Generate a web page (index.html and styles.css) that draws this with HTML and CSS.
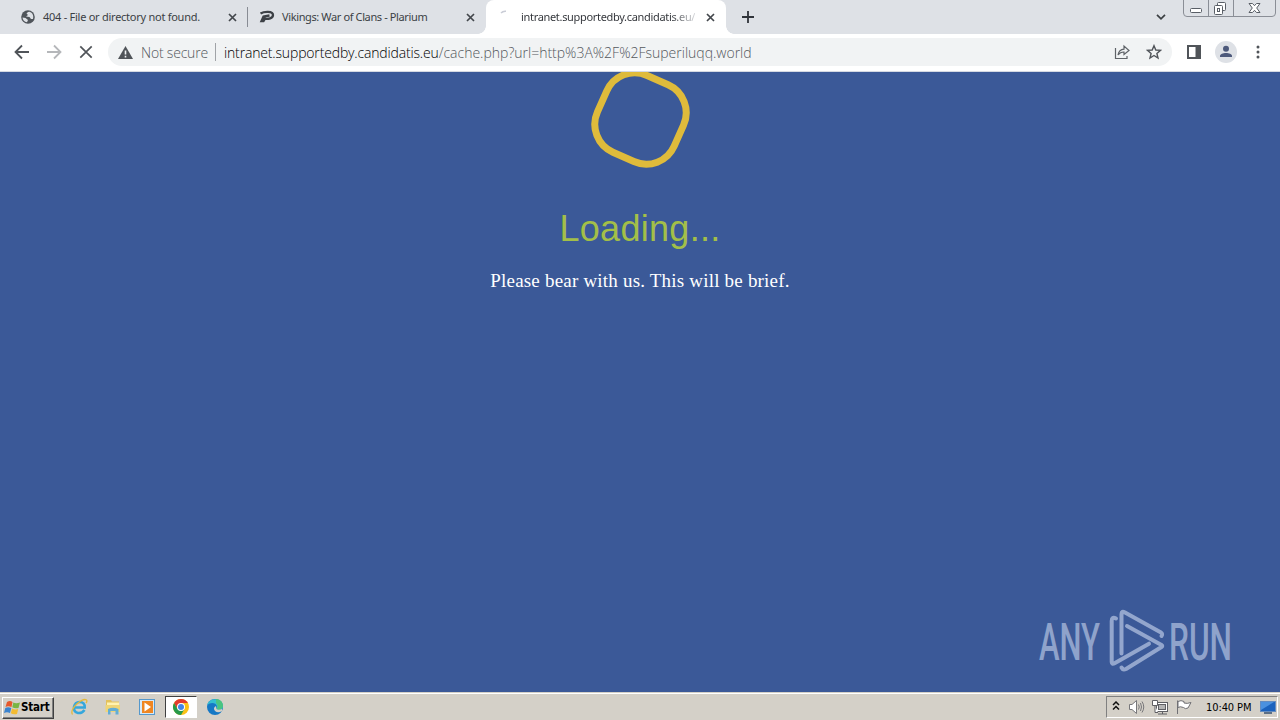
FILE: index.html
```
<!DOCTYPE html>
<html lang="en">
  <head>
    <meta charset="UTF-8" />
    <meta name="viewport" content="width=device-width, initial-scale=1.0" />
    <title>Loading</title>
    <link rel="stylesheet" href="styles.css">
  </head>
  <body>
    <div class="tab-strip">
      <div class="tab tab-first">
        <svg class="tab-icon" width="14" height="14" viewBox="0 0 14 14">
          <circle cx="7" cy="7" r="6.8" fill="#50555b"/>
          <path d="M1.5 7.5 L4.5 8 L7 10 L6 12.3 C3.5 12 1.7 10 1.5 7.5Z M7 2 L5.5 3.5 L7 5 L5 6.5 L8.5 7 L10 9 L12 9 C13 6 11.500 2.500 8.500 1.800Z" fill="#dee1e6"/>
        </svg>
        <span class="tab-title title-one">404 - File or directory not found.</span>
        <svg class="close" width="9" height="9" viewBox="0 0 9 9"><path d="M1 1 L8 8 M8 1 L1 8"/></svg>
      </div>
      <div class="tab tab-second">
        <svg class="tab-icon" width="16" height="14" viewBox="0 0 16 14">
          <path d="M1.500 3.500 C5 1.500 14 .8 14 5 C14 8.500 9 9.300 6 8.700 L4.500 11 L2.500 11 L4.500 6.500 L10.500 5.500" fill="none" stroke="#3c4046" stroke-width="2.300"/>
        </svg>
        <span class="tab-title title-two">Vikings: War of Clans - Plarium</span>
        <svg class="close" width="9" height="9" viewBox="0 0 9 9"><path d="M1 1 L8 8 M8 1 L1 8"/></svg>
      </div>
      <div class="tab tab-active">
        <svg class="tab-icon" width="14" height="14" viewBox="0 0 14 14"><path d="M4 3 Q6 .8 9 1.200" fill="none" stroke="#c9ccd6" stroke-width="1.500"/></svg>
        <span class="tab-title title-three">intranet.supportedby.candidatis.eu/</span>
        <svg class="close" width="9" height="9" viewBox="0 0 9 9"><path d="M1 1 L8 8 M8 1 L1 8"/></svg>
      </div>
      <svg class="new-tab" width="12" height="12" viewBox="0 0 12 12"><path d="M6 0 V12 M0 6 H12" stroke="#30343a" stroke-width="1.800"/></svg>
      <svg class="tab-search" width="10" height="6" viewBox="0 0 10 6"><path d="M1 .8 L5 4.800 L9 .8" fill="none" stroke="#3c4043" stroke-width="1.700"/></svg>
      <svg class="window-buttons" width="94" height="17" viewBox="0 0 94 17">
        <path d="M.5 0 V13 Q.5 16.500 4 16.500 H89 Q92.500 16.500 92.500 13 V0 M25.500 0 V16 M50.500 0 V16" fill="none" stroke="#8a8e96"/>
        <rect x="7.500" y="8.500" width="11" height="4" rx="1" fill="#fff" stroke="#595e66"/>
        <g fill="#fff" stroke="#595e66">
          <rect x="34.500" y="2.500" width="8" height="8" rx="1"/>
          <rect x="31.500" y="5.500" width="8" height="9" rx="1"/>
          <rect x="34.500" y="8.500" width="2" height="3"/>
          <path d="M66 3.500 H69.500 L71.500 5.700 L73.500 3.500 H77 L73.700 8 L77 12.500 H73.500 L71.500 10.300 L69.500 12.500 H66 L69.300 8Z"/>
        </g>
      </svg>
    </div>

    <div class="toolbar">
      <div class="nav-buttons">
        <svg width="16" height="16" viewBox="0 0 16 16"><path d="M15 8 H2 M8 1.500 L1.500 8 L8 14.500" fill="none" stroke="#505459" stroke-width="1.800"/></svg>
        <svg width="16" height="16" viewBox="0 0 16 16"><path d="M1 8 H14 M8 1.500 L14.500 8 L8 14.500" fill="none" stroke="#b5b7ba" stroke-width="1.800"/></svg>
        <svg width="16" height="16" viewBox="0 0 16 16"><path d="M2.300 2.300 L13.700 13.700 M13.700 2.300 L2.300 13.700" fill="none" stroke="#505459" stroke-width="1.700"/></svg>
      </div>
      <div class="address-bar">
        <svg width="15" height="13" viewBox="0 0 15 13"><path d="M7.500 0 L15 13 H0Z" fill="#505459"/><path d="M7.500 4.500 V8.500 M7.500 9.800 V11.500" stroke="#f1f3f4" stroke-width="1.600"/></svg>
        <span class="not-secure">Not secure</span>
        <span class="url"><span class="url-host">intranet.supportedby.candidatis.eu</span><span class="url-path">/cache.php?url=http%3A%2F%2Fsuperiluqq.world</span></span>
        <svg class="share" width="16" height="16" viewBox="0 0 16 16"><path d="M1.500 4 V14.500 H13 V12 M4 11 Q5 5.500 10 5.200 V2 L15 6.500 L10 10.500 V8 Q6.500 7.800 4 11Z" fill="none" stroke="#5f6368" stroke-width="1.200"/></svg>
        <svg class="star" width="16" height="16" viewBox="0 0 16 16"><path d="M8 1.700 L9.800 6 L14.500 6.400 L10.900 9.400 L12 14 L8 11.500 L4 14 L5.100 9.400 L1.500 6.400 L6.200 6Z" fill="none" stroke="#505459" stroke-width="1.400"/></svg>
      </div>
      <svg class="side-panel" width="14" height="14" viewBox="0 0 14 14"><rect x="1" y="1" width="12" height="12" fill="#fff" stroke="#505459" stroke-width="2"/><path d="M8.500 1 H13 V13 H8.500Z" fill="#505459"/></svg>
      <svg class="profile" width="22" height="22" viewBox="0 0 22 22"><circle cx="11" cy="11" r="11" fill="#dee1e6"/><circle cx="11" cy="7.700" r="3" fill="#4d597b"/><path d="M5 16 V15 C5 11 17 11 17 15 V16Z" fill="#4d597b"/></svg>
      <svg class="menu" width="4" height="14" viewBox="0 0 4 14" fill="#505459"><circle cx="2" cy="2" r="1.500"/><circle cx="2" cy="7" r="1.500"/><circle cx="2" cy="12" r="1.500"/></svg>
    </div>

    <main class="page">
      <div class="loader"></div>
      <h1>Loading...</h1>
      <p>Please bear with us. This will be brief.</p>

      <svg class="watermark" width="210" height="70" viewBox="0 0 210 70">
        <g class="watermark-text">
          <text x="3" y="54.500" textLength="61" lengthAdjust="spacingAndGlyphs">ANY</text>
          <text x="133" y="54.500" textLength="63" lengthAdjust="spacingAndGlyphs">RUN</text>
        </g>
        <g fill="none" stroke="#93a6cd" stroke-width="4" stroke-linejoin="round" stroke-linecap="round">
          <path d="M80 13.500 Q75.700 11 75.700 16 V57 Q75.700 60 79 58 L113 38.700"/>
          <path d="M85.500 48.500 V9 Q85.500 5.500 89 7.500 L125 27.500 Q127 29 125.500 31"/>
          <path d="M91 21 L125.500 40 Q127 41 125.500 42 L90 64 Q87 65.500 85.500 62.500"/>
        </g>
      </svg>
    </main>

    <div class="taskbar">
      <div class="start">
        <svg width="17" height="16" viewBox="0 0 17 16">
          <path d="M3 2 Q6 0 8.500 2 L7.500 7 Q4 5.500 1.500 7Z" fill="#e6582b"/>
          <path d="M9.300 2.500 Q12 4 16 2.500 L14.500 8 Q11 9 8.300 7.300Z" fill="#79b543"/>
          <path d="M1.300 8 Q4 6.500 7.300 8 L6 13 Q3 11.500 0 13Z" fill="#3a83cf"/>
          <path d="M8.100 8.400 Q11 10 14.200 9 L13 14 Q9.500 15 6.800 13.300Z" fill="#f3bb32"/>
        </svg>
        <span>Start</span>
      </div>
      <div class="quick-launch">
        <div class="launch">
          <svg width="18" height="18" viewBox="0 0 18 18"><path d="M14.500 12 Q12 15.500 8 15 Q3.500 14 4 9 Q5 4 9.500 4 Q15 4 14.700 9.500 H5" fill="none" stroke="#35a7dc" stroke-width="2.600"/><path d="M2.500 16.500 C-1 11 13 -1 16.500 2 Q17.500 3 16 5" fill="none" stroke="#e5b93c" stroke-width="1.300"/></svg>
        </div>
        <div class="launch">
          <svg width="18" height="18" viewBox="0 0 18 18"><path d="M2 2 H7 L8 3.500 H15 V14 H2Z" fill="#e3c15c"/><path d="M3 4.500 H15 V9 H3Z" fill="#fff2b0"/><path d="M1.500 7 H16 V14 H1.500Z" fill="#efd577"/><path d="M4 16.500 V11 Q9 8.500 14.500 11 V16.500 H11.500 V13 H6.500 V16.500Z" fill="#62add5"/></svg>
        </div>
        <div class="launch">
          <svg width="18" height="18" viewBox="0 0 18 18"><rect x="1.500" y="1.500" width="15" height="15" fill="#d5e9f8" stroke="#5598cc"/><rect x="4" y="3" width="11" height="12" fill="#ef8622"/><path d="M6.500 4.500 L13 9 L6.500 13.500Z" fill="#fff"/></svg>
        </div>
        <div class="launch launch-active">
          <svg width="18" height="18" viewBox="0 0 18 18"><circle cx="9" cy="9" r="8" fill="#fbc116"/><path d="M2.070 5 A8 8 0 0 1 15.930 5 H9 L5.500 11Z" fill="#e33b2e"/><path d="M2.070 5 A8 8 0 0 0 9 17 L12.500 11 H5.500Z" fill="#26994a"/><circle cx="9" cy="9" r="4" fill="#fff"/><circle cx="9" cy="9" r="3" fill="#4285e8"/></svg>
        </div>
        <div class="launch">
          <svg width="18" height="18" viewBox="0 0 18 18"><circle cx="9" cy="9" r="8" fill="#1678c5"/><path d="M1.300 7 C3 -1 16.500 -.5 17 8 C17 12 12 12.500 10.500 11 C13 5 5 3 1.300 7Z" fill="#35bfd0"/><path d="M10 1.100 C14 1 17 4 17 8 C17 11.500 12 12.500 10.500 11 Q13 8 10 5Z" fill="#4ac481"/><path d="M10 8 Q6.500 10 9 13 Q12 15.500 16 13 L16 11 Q12 12.500 10.500 11Z" fill="#d4d0c8"/></svg>
        </div>
      </div>
      <div class="tray">
        <svg class="chevrons" width="8" height="10" viewBox="0 0 8 10"><path d="M1 4 L4 1 L7 4 M1 8.500 L4 5.500 L7 8.500" fill="none" stroke="#111" stroke-width="1.500"/></svg>
        <svg class="speaker" width="18" height="16" viewBox="0 0 18 16" fill="none" stroke="#77777a"><path d="M1.500 5.500 H4 L8.500 1.500 V14.500 L4 10.500 H1.500Z" fill="#fff"/><path d="M10.500 5.500 Q12 8 10.500 10.500 M12.500 4 Q14.500 8 12.500 12 M14 2.500 Q17.500 8 14 13.500"/></svg>
        <svg class="network" width="17" height="16" viewBox="0 0 17 16" stroke="#606064" fill="#fff"><rect x="4.500" y="3.500" width="11" height="9"/><rect x="6.500" y="5.500" width="7" height="5" fill="#b5b5b5"/><path d="M6 15 H15 M10.500 13 V15"/><path d="M.5 1.500 H5.500 V6.500 H.5Z M3 6.500 V13.500 H6"/></svg>
        <svg class="flag" width="17" height="16" viewBox="0 0 17 16" stroke="#707074" fill="#fff"><path d="M2.500 1.500 V15 M3 2.500 Q6 .8 9 2.500 V4 Q12 5 16 3.500 L13 9 Q10 10.500 8.500 8.500 Q5 7 3 8.500Z"/></svg>
        <span class="clock">10:40 PM</span>
        <svg class="desktop" width="16" height="13" viewBox="0 0 16 13"><rect x=".5" y=".5" width="15" height="10" fill="#1b62bd" stroke="#648cc0"/><path d="M1 9 L14 1 H1Z" fill="#4b91df"/><path d="M4 12 H12" stroke="#5c6f86" stroke-width="2"/></svg>
      </div>
    </div>
  </body>
</html>
```
FILE: styles.css
```
* {
  box-sizing: border-box;
}

body {
  margin: 0;
  width: 1280px;
  height: 720px;
  overflow: hidden;
  display: flex;
  flex-direction: column;
  font-family: "DejaVu Sans Condensed", "DejaVu Sans", sans-serif;
}

svg {
  flex: none;
}

.tab-strip {
  height: 34px;
  background-color: #dee1e6;
  display: flex;
  align-items: center;
}

.tab {
  height: 34px;
  display: flex;
  align-items: center;
  position: relative;
}

.tab-first {
  width: 248px;
  padding: 0 11px 0 21px;
}

.tab-first::after {
  content: "";
  width: 1px;
  height: 20px;
  background-color: #888c94;
  position: absolute;
  right: 0;
  top: 7px;
}

.tab-second {
  width: 238px;
  padding: 0 11px 0 11px;
}

.tab-active {
  width: 240px;
  padding: 0 11px 0 11px;
  background-color: white;
  border-radius: 8px 8px 0 0;
}

.tab-active::before,
.tab-active::after {
  content: "";
  width: 8px;
  height: 8px;
  position: absolute;
  bottom: 0;
}

.tab-active::before {
  left: -8px;
  background: radial-gradient(circle at 0 0, #dee1e6 7.5px, white 8px);
}

.tab-active::after {
  right: -8px;
  background: radial-gradient(circle at 100% 0, #dee1e6 7.5px, white 8px);
}

.tab-title {
  margin-left: 8px;
  font-family: "Noto Sans", sans-serif;
  font-size: 11px;
  line-height: 16px;
  color: #3b3f44;
  white-space: nowrap;
}

.title-one {
  letter-spacing: -0.26px;
}

.title-two {
  margin-left: 7px;
  letter-spacing: -0.38px;
}

.title-three {
  margin-left: 10px;
  letter-spacing: -0.32px;
  color: transparent;
  background: linear-gradient(to right, #303338 86%, #d5d7da);
  -webkit-background-clip: text;
  background-clip: text;
}

.close {
  margin-left: auto;
  fill: none;
  stroke: #43474c;
  stroke-width: 1.7;
}

.new-tab {
  margin-left: 16px;
}

.tab-search {
  margin-left: auto;
}

.window-buttons {
  align-self: flex-start;
  margin: 0 3px 0 17px;
}

.toolbar {
  height: 38px;
  padding-bottom: 1px;
  background-color: white;
  border-bottom: 1px solid #d5d9e2;
  display: flex;
  align-items: center;
}

.nav-buttons {
  width: 108px;
  padding-left: 14px;
  display: flex;
  gap: 16px;
}

.address-bar {
  width: 1064px;
  height: 28px;
  padding: 0 10px;
  background-color: #f1f3f4;
  border-radius: 14px;
  display: flex;
  align-items: center;
  font-family: "Open Sans", "Noto Sans", sans-serif;
  font-size: 14px;
  font-weight: 300;
  white-space: nowrap;
}

.not-secure {
  width: 75px;
  margin-left: 8px;
  color: #54585d;
  height: 18px;
  line-height: 20px;
  letter-spacing: -0.2px;
  border-right: 1px solid #a0a3a7;
}

.url {
  margin-left: 8px;
  color: #54585d;
}

.url-host {
  color: #000;
  letter-spacing: -0.16px;
}

.share {
  margin-left: auto;
}

.star {
  margin-left: 16px;
}

.side-panel {
  margin-left: 15px;
}

.profile {
  margin-left: 14px;
}

.menu {
  margin-left: 19px;
}

.page {
  height: 620px;
  background-color: #3b5998;
  overflow: hidden;
  position: relative;
  text-align: center;
}

.loader {
  width: 91px;
  height: 91px;
  margin: 1px auto 0;
  border: 7px solid #dfbb3b;
  border-radius: 34px;
  transform: rotate(24deg);
}

h1 {
  margin: 44px 0 0;
  color: #a3bf48;
  font-family: "Liberation Sans", sans-serif;
  font-size: 36px;
  font-weight: normal;
  line-height: 42px;
  letter-spacing: 0.3px;
}

.page p {
  margin: 19px 0 0;
  color: white;
  font-family: "Palatino Linotype", "Liberation Serif", serif;
  font-size: 19px;
  line-height: 24px;
  letter-spacing: 0.2px;
}

.watermark {
  position: absolute;
  left: 1036px;
  top: 533px;
}

.watermark-text {
  fill: #8fa3cb;
  font-family: "Roboto", sans-serif;
  font-size: 51px;
  font-weight: 500;
}

.taskbar {
  height: 28px;
  padding: 0 2px;
  background-color: #d4d0c8;
  border-top: 1px solid #d4d0c8;
  box-shadow: inset 0 1px white;
  display: flex;
  align-items: center;
}

.start {
  width: 52px;
  height: 22px;
  margin-top: 2px;
  padding-left: 1px;
  border: 1px solid;
  border-color: white #404040 #404040 white;
  box-shadow: inset -1px -1px #808080;
  display: flex;
  align-items: center;
  font-size: 11.5px;
  font-weight: bold;
  letter-spacing: -0.2px;
}

.start span {
  margin-top: -1px;
}

.quick-launch {
  margin: 1px 0 0 9px;
  display: flex;
  gap: 2px;
}

.launch {
  width: 32px;
  height: 22px;
  display: flex;
  align-items: center;
  justify-content: center;
}

.launch-active {
  background-color: white;
  border: 1px solid;
  border-color: #404040 white white #404040;
}

.tray {
  width: 172px;
  height: 22px;
  margin: 1px 0 0 auto;
  padding-left: 5px;
  border: 1px solid;
  border-color: #808080 white white #808080;
  display: flex;
  align-items: center;
  font-size: 11px;
}

.chevrons {
  margin-top: -2px;
}

.speaker {
  margin-left: 8px;
}

.network {
  margin-left: 6px;
}

.flag {
  margin-left: 6px;
}

.clock {
  margin-left: 14px;
  width: 47px;
  white-space: nowrap;
  letter-spacing: -0.1px;
}

.desktop {
  margin-left: 7px;
}
```
